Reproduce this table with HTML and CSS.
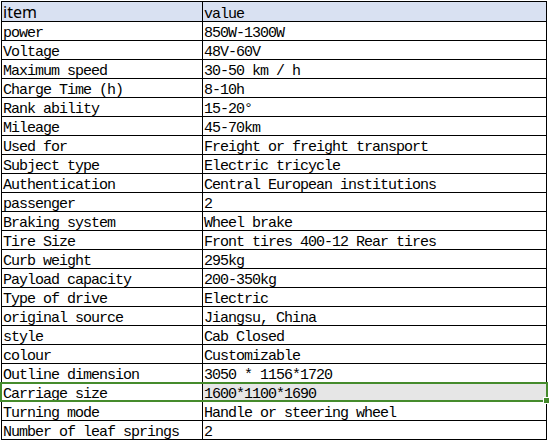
FILE: index.html
```html
<!DOCTYPE html>
<html>
<head>
<meta charset="utf-8">
<link rel="stylesheet" href="styles.css">
</head>
<body>
<div class="sheet">
  <table class="spec">
    <tr class="head"><td class="k">item</td><td class="v">value</td></tr>
    <tr><td class="k">power</td><td class="v">850W-1300W</td></tr>
    <tr><td class="k">Voltage</td><td class="v">48V-60V</td></tr>
    <tr><td class="k">Maximum speed</td><td class="v">30-50 km / h</td></tr>
    <tr><td class="k">Charge Time (h)</td><td class="v">8-10h</td></tr>
    <tr><td class="k">Rank ability</td><td class="v">15-20°</td></tr>
    <tr><td class="k">Mileage</td><td class="v">45-70km</td></tr>
    <tr><td class="k">Used for</td><td class="v">Freight or freight transport</td></tr>
    <tr><td class="k">Subject type</td><td class="v">Electric tricycle</td></tr>
    <tr><td class="k">Authentication</td><td class="v">Central European institutions</td></tr>
    <tr><td class="k">passenger</td><td class="v">2</td></tr>
    <tr><td class="k">Braking system</td><td class="v">Wheel brake</td></tr>
    <tr><td class="k">Tire Size</td><td class="v">Front tires 400-12 Rear tires</td></tr>
    <tr><td class="k">Curb weight</td><td class="v">295kg</td></tr>
    <tr><td class="k">Payload capacity</td><td class="v">200-350kg</td></tr>
    <tr><td class="k">Type of drive</td><td class="v">Electric</td></tr>
    <tr><td class="k">original source</td><td class="v">Jiangsu, China</td></tr>
    <tr><td class="k">style</td><td class="v">Cab Closed</td></tr>
    <tr><td class="k">colour</td><td class="v">Customizable</td></tr>
    <tr><td class="k">Outline dimension</td><td class="v">3050 * 1156*1720</td></tr>
    <tr class="sel"><td class="k">Carriage size</td><td class="v">1600*1100*1690</td></tr>
    <tr><td class="k">Turning mode</td><td class="v">Handle or steering wheel</td></tr>
    <tr><td class="k">Number of leaf springs</td><td class="v">2</td></tr>
  </table>
  <div class="selection"><span class="handle"></span></div>
</div>
</body>
</html>
```
FILE: styles.css
```css
html, body {
  margin: 0;
  padding: 0;
  background: #ffffff;
}
.sheet {
  position: relative;
  width: 551px;
  height: 442px;
  padding: 1px 0 0 1px;
  box-sizing: border-box;
  overflow: hidden;
}
.spec {
  border-collapse: separate;
  border-spacing: 0;
  border-top: 1px solid #000;
  border-left: 1px solid #000;
  font-family: "Liberation Mono", monospace;
  font-size: 15px;
  letter-spacing: -1px;
  color: #000;
}
.spec td {
  height: 19px;
  padding: 0;
  box-sizing: border-box;
  border-right: 1px solid #000;
  border-bottom: 1px solid #000;
  vertical-align: bottom;
  line-height: 13px;
  white-space: nowrap;
  overflow: hidden;
}
.spec td.k {
  width: 201px;
  min-width: 201px;
  max-width: 201px;
  padding-left: 1px;
}
.spec td.v {
  width: 344px;
  min-width: 344px;
  max-width: 344px;
  padding-left: 1px;
}
.head td {
  background: #d9e1f2;
  height: 20px;
}
.head td.k {
  font-family: "Noto Sans", "Liberation Sans", sans-serif;
  font-size: 16px;
  letter-spacing: 0;
  line-height: 18px;
  padding-left: 1px;
}
.sel td.v {
  background: #e6e6e6;
}
.selection {
  position: absolute;
  left: 0;
  top: 382px;
  width: 548px;
  height: 20px;
  box-sizing: border-box;
  border: 2px solid #458b2c;
  pointer-events: none;
}
.handle {
  position: absolute;
  right: -4px;
  bottom: -4px;
  width: 5px;
  height: 5px;
  background: #458b2c;
  border: 1px solid #fff;
}
```
